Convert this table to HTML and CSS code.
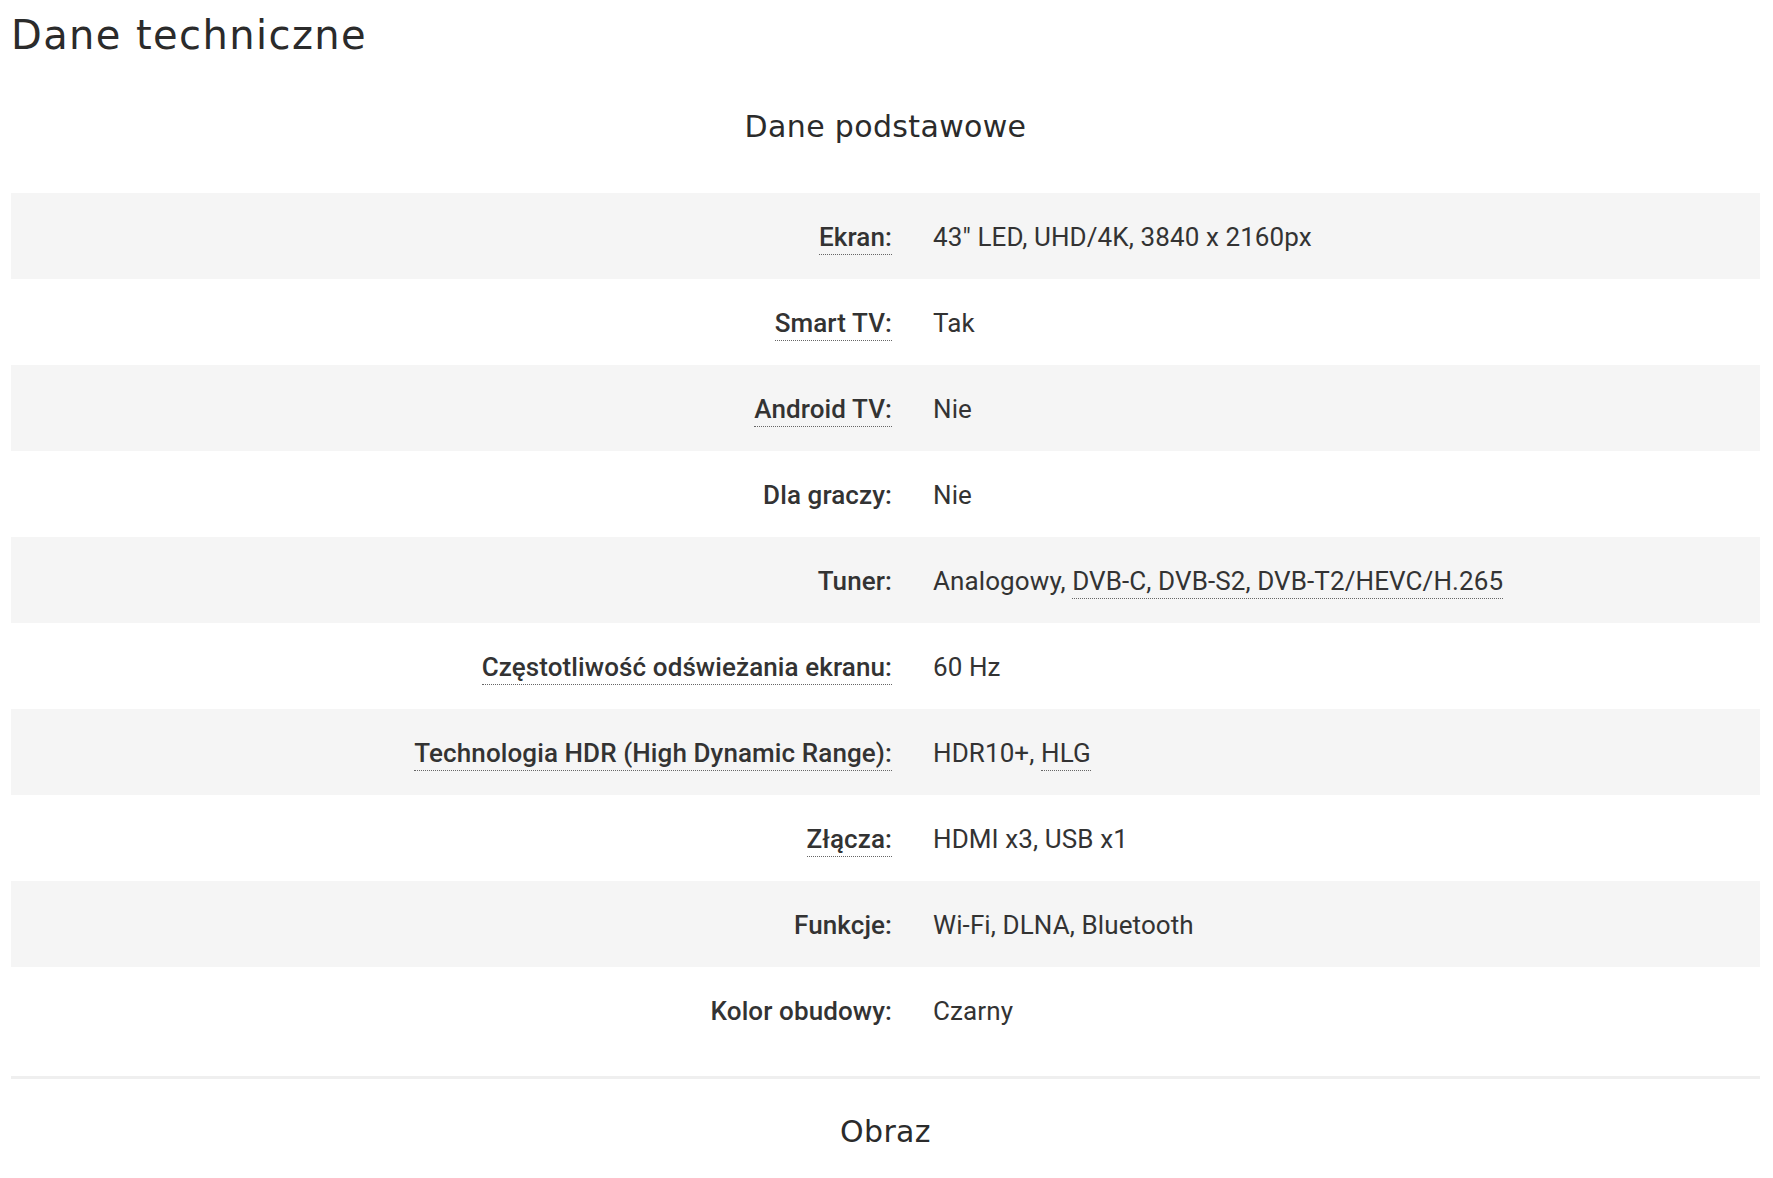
FILE: index.html
```html
<!DOCTYPE html>
<html lang="pl">
<head>
<meta charset="utf-8">
<title>Dane techniczne</title>
<link rel="stylesheet" href="styles.css">
</head>
<body>
<div class="page">
  <h1 class="title">Dane techniczne</h1>
  <h2 class="group-title">Dane podstawowe</h2>
  <div class="specs">
    <div class="row alt"><div class="label"><span class="tip">Ekran:</span></div><div class="value">43" LED, UHD/4K, 3840 x 2160px</div></div>
    <div class="row"><div class="label"><span class="tip">Smart TV:</span></div><div class="value">Tak</div></div>
    <div class="row alt"><div class="label"><span class="tip">Android TV:</span></div><div class="value">Nie</div></div>
    <div class="row"><div class="label"><span>Dla graczy:</span></div><div class="value">Nie</div></div>
    <div class="row alt"><div class="label"><span>Tuner:</span></div><div class="value">Analogowy, <span class="tip">DVB-C, DVB-S2, DVB-T2/HEVC/H.265</span></div></div>
    <div class="row"><div class="label"><span class="tip">Częstotliwość odświeżania ekranu:</span></div><div class="value">60 Hz</div></div>
    <div class="row alt"><div class="label"><span class="tip">Technologia HDR (High Dynamic Range):</span></div><div class="value">HDR10+, <span class="tip">HLG</span></div></div>
    <div class="row"><div class="label"><span class="tip">Złącza:</span></div><div class="value">HDMI x3, USB x1</div></div>
    <div class="row alt"><div class="label"><span>Funkcje:</span></div><div class="value">Wi-Fi, DLNA, Bluetooth</div></div>
    <div class="row"><div class="label"><span>Kolor obudowy:</span></div><div class="value">Czarny</div></div>
  </div>
  <hr class="sep">
  <h2 class="group-title next">Obraz</h2>
</div>
</body>
</html>
```
FILE: styles.css
```css
html, body {
  margin: 0;
  padding: 0;
  background: #ffffff;
}
.page {
  padding: 0 13px 0 11px;
  color: #333333;
}
.title {
  margin: 0;
  padding-top: 11px;
  font-family: "DejaVu Sans", "Open Sans", sans-serif;
  font-weight: normal;
  font-size: 40px;
  line-height: 48px;
  letter-spacing: 1.4px;
  color: #2b2b2b;
}
.group-title {
  margin: 50px 0 0 0;
  text-align: center;
  font-family: "DejaVu Sans", "Open Sans", sans-serif;
  font-weight: normal;
  font-size: 30px;
  line-height: 36px;
  letter-spacing: 0.35px;
  color: #2b2b2b;
}
.group-title.next {
  margin-top: 35px;
}
.specs {
  margin-top: 48px;
  font-family: Roboto, "Liberation Sans", sans-serif;
  font-size: 26px;
  line-height: 30px;
  letter-spacing: 0.1px;
}
.row {
  display: grid;
  grid-template-columns: 881px 1fr;
  height: 86px;
  box-sizing: border-box;
  padding-top: 29px;
}
.row.alt {
  background: #f5f5f5;
}
.label {
  text-align: right;
  font-weight: 500;
  color: #333333;
}
.value {
  padding-left: 41px;
  color: #333333;
}
.tip {
  border-bottom: 1px dotted #666666;
  padding-bottom: 2px;
}
.sep {
  margin: 23px 0 0 0;
  border: 0;
  height: 3px;
  background: #efefef;
}
```
